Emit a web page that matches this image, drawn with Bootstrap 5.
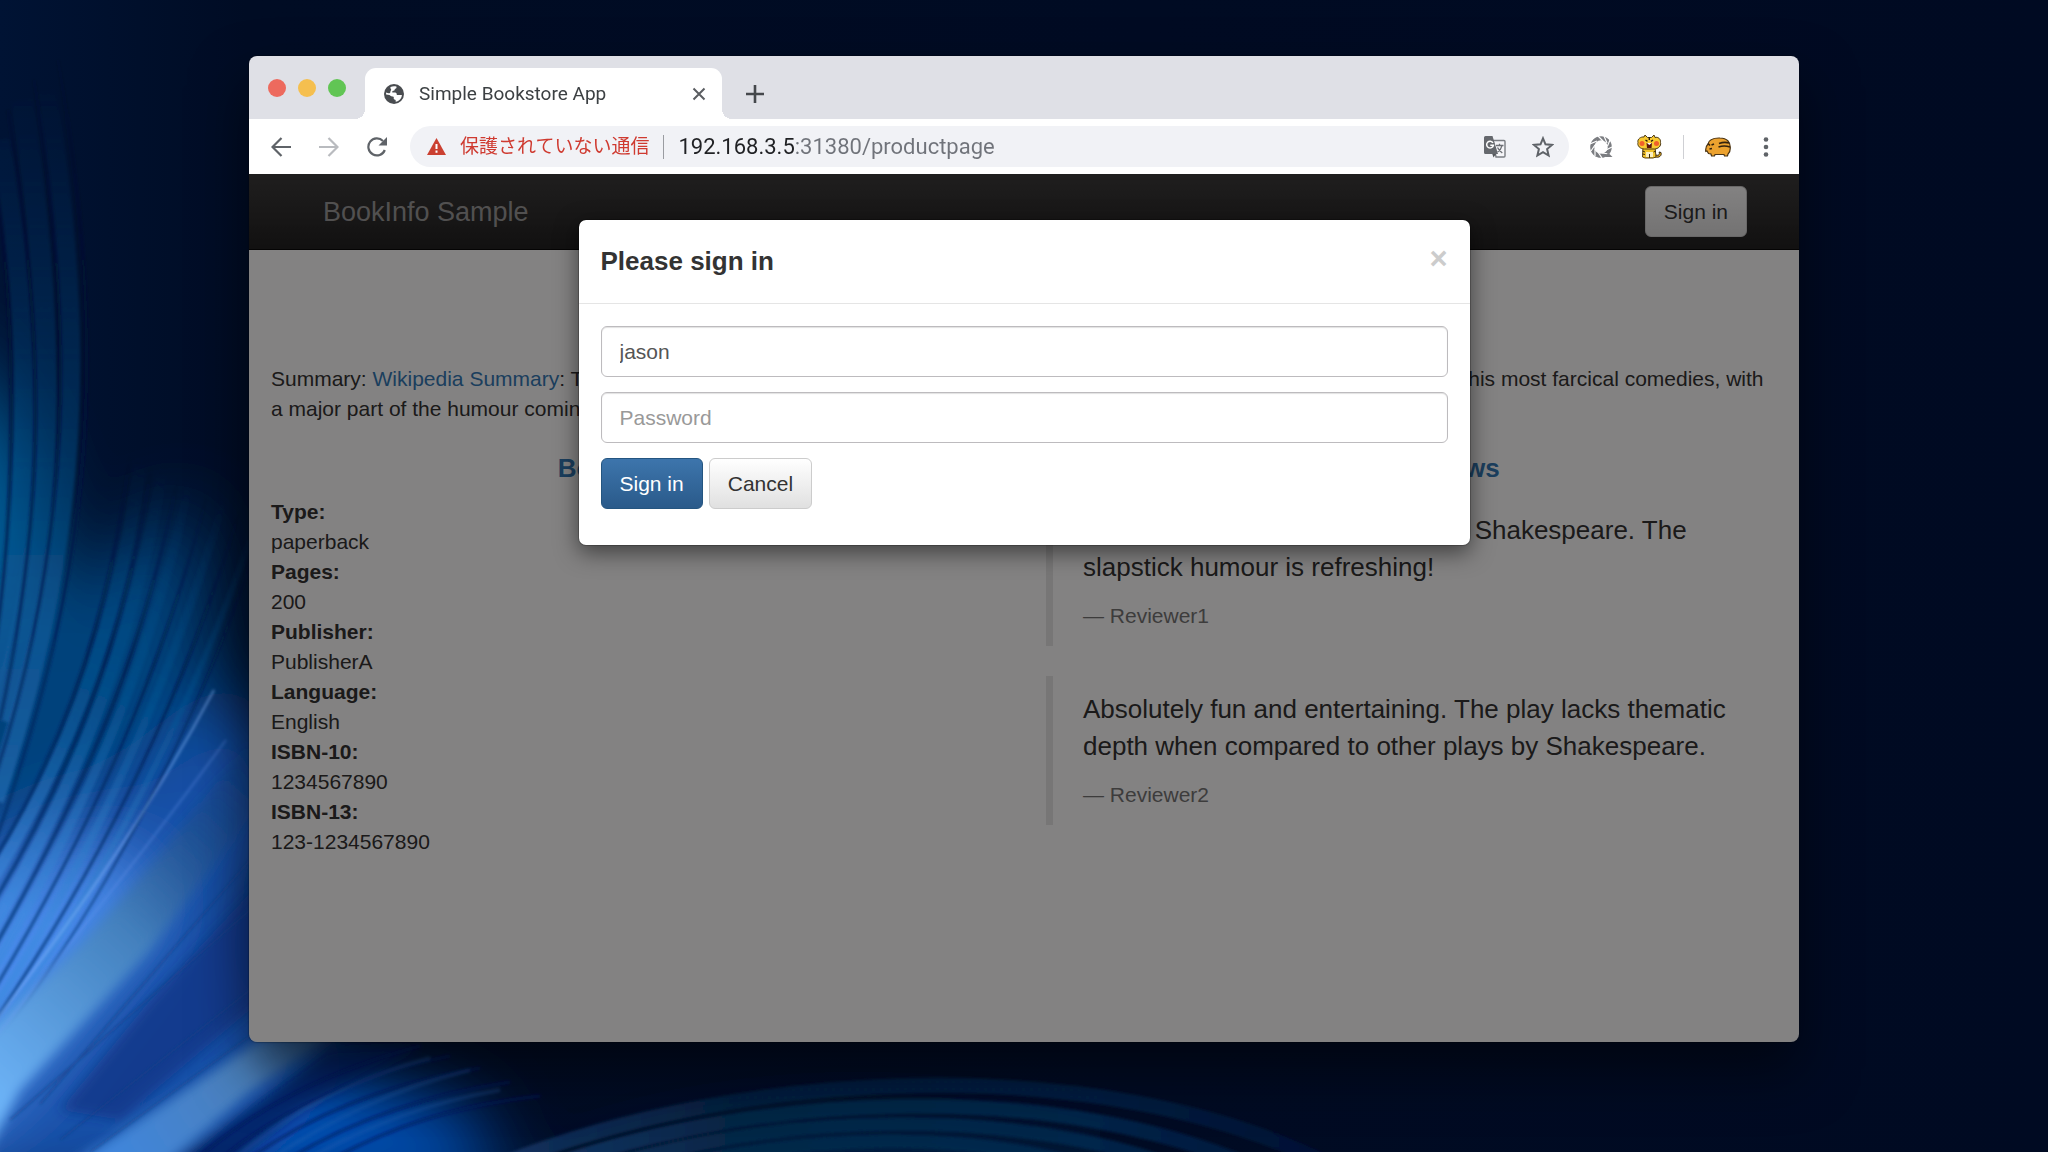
<!DOCTYPE html>
<html lang="en">
<head>
<meta charset="utf-8">
<meta name="viewport" content="width=device-width, initial-scale=1">
<title>Simple Bookstore App</title>
<link href="https://cdn.jsdelivr.net/npm/bootstrap@5.3.0/dist/css/bootstrap.min.css" rel="stylesheet">
<style>
  body { background: #000a20; font-family: "Liberation Sans", Arial, sans-serif; font-size: 21px; line-height: 30px; color: #333; }
  .wallpaper { position: fixed; inset: 0; width: 100%; height: 100%; z-index: -1; }
  .desktop { padding: 56px 249px 110px; }
  .browser { border-radius: 8px; overflow: hidden; box-shadow: 0 28px 56px rgba(0,0,0,.5), 0 0 2px rgba(0,0,0,.7); }
  .desktop a { color: #337ab7; text-decoration: none; }

  /* browser chrome */
  .tab-strip { height: 63px; background: #dfe0e6; padding-left: 19px; }
  .lights { gap: 12px; padding-top: 23px; }
  .light { width: 18px; height: 18px; padding: 0; border: 0; border-radius: 50%; }
  .light-red { background: #ed6a5e; } .light-yellow { background: #f5bf4f; } .light-green { background: #61c554; }
  .page-tab { position: relative; width: 357px; height: 51px; margin-left: 19px; padding: 0 16px 0 19px; gap: 15px; background: #fff; border-radius: 11px 11px 0 0; font: 19px/24px Roboto, sans-serif; color: #3c4043; }
  .page-tab::before, .page-tab::after { content: ""; position: absolute; bottom: 0; width: 10px; height: 10px; }
  .page-tab::before { right: 100%; background: radial-gradient(circle at 0 0, transparent 10px, #fff 10px); }
  .page-tab::after { left: 100%; background: radial-gradient(circle at 100% 0, transparent 10px, #fff 10px); }
  .bare { display: flex; padding: 0; border: 0; background: none; }
  .new-tab { margin: 12px 0 0 24px; height: 51px; align-items: center; }
  .toolbar { height: 55px; background: #fff; padding: 0 30px 0 22px; }
  .history { gap: 28px; }
  .omnibox { height: 41px; margin: 0 21px 0 23px; padding: 0 15px 0 17px; border-radius: 21px; background: #f1f2f6; }
  .insecure { margin-left: 14px; font: 19px/24px Roboto, "Noto Sans CJK JP", sans-serif; color: #cf3a30; white-space: nowrap; }
  .rule { width: 1px; height: 24px; background: #9a9ca1; margin: 0 14px; }
  .address { min-width: 0; border: 0; outline: 0; padding: 0; font: 22px/28px Roboto, sans-serif; color: #202124;
    background: linear-gradient(90deg, #202124 118px, #70737a 118px); -webkit-background-clip: text; background-clip: text; -webkit-text-fill-color: transparent; }
  .omni-icons { gap: 26px; }
  .extensions { gap: 24px; }
  .faint-rule { width: 1px; height: 24px; background: #cfd0d4; margin: 0 -3px; }

  /* web page */
  .site { background: #fff; flex: 1 1 auto; position: relative; }
  .site-bar { min-height: 76px; padding: 12px 52px 12px 74px; background: linear-gradient(#3c3c3c, #222); border-bottom: 1px solid #080808; }
  .site-bar .navbar-brand { font-size: 27px; line-height: 30px; color: #9d9d9d; margin: 0; padding: 0; }
  .btn-site { height: 51px; padding: 0 18px; font-size: 21px; line-height: 30px; border-radius: 6px; }
  .btn-plain { color: #333; border-color: #ccc; background: linear-gradient(#fff, #e0e0e0); }
  .btn-blue { color: #fff; border-color: #245580; background: linear-gradient(#3d75ac, #2a5a8a); }
  .gutter { padding: 0 22px; }
  .summary { padding-top: 30px; }
  .site h3 { font-size: 36px; line-height: 39px; margin: 30px 0 15px; color: #337ab7; font-weight: 500; }
  .site h4 { font-size: 26px; line-height: 29px; margin: 15px 0 14px; color: #337ab7; font-weight: 700; }
  .site p { margin: 0 0 15px; }
  .site dl, .site dd { margin: 0; }
  .review { margin: 0 0 30px; padding: 15px 30px; border-left: 7px solid #e8e8e8; font-size: 26px; line-height: 37px; }
  .review footer { font-size: 21px; line-height: 30px; color: #777; }

  /* sign-in dialog */
  .login { position: absolute; display: block; background: rgba(2,0,1,.49); }
  .login .modal-dialog { max-width: 893px; margin: 45px auto; }
  .login .modal-content { border: 1px solid rgba(0,0,0,.2); border-radius: 8px; box-shadow: 0 7px 22px rgba(0,0,0,.5); color: #333; }
  .login .modal-header { padding: 22px; align-items: flex-start; border-bottom: 1px solid #e5e5e5; }
  .login .modal-title { font-size: 26px; line-height: 39px; font-weight: 700; }
  .login .modal-body { padding: 22px 22px 36px; }
  .shut { font-size: 31px; line-height: 33px; font-weight: 700; color: #ccc; }
  .login .form-control { height: 51px; margin-bottom: 15px; padding: 8px 18px; font-size: 21px; line-height: 30px; border: 1px solid #bdbbbe; border-radius: 6px; color: #555; box-shadow: inset 0 1px 1px rgba(0,0,0,.12); }
  .login .form-control::placeholder { color: #999; }
  .actions { gap: 6px; }
</style>
<script src="https://cdn.jsdelivr.net/npm/bootstrap@5.3.0/dist/js/bootstrap.bundle.min.js"></script>
</head>
<body>

<svg class="wallpaper" viewBox="0 0 2048 1152" preserveAspectRatio="none" aria-hidden="true">
  <defs>
    <linearGradient id="night" x1="0" x2="1"><stop offset="0" stop-color="#001334"/><stop offset=".12" stop-color="#000c24"/><stop offset="1" stop-color="#000a22"/></linearGradient>
    <linearGradient id="fadeDown" gradientUnits="userSpaceOnUse" x1="0" y1="80" x2="0" y2="1000"><stop offset="0" stop-color="#0b4a8c" stop-opacity="0"/><stop offset=".45" stop-color="#05508a" stop-opacity=".5"/><stop offset="1" stop-color="#3f86d8" stop-opacity=".7"/></linearGradient>
    <linearGradient id="fadeOut" gradientUnits="userSpaceOnUse" x1="190" y1="480" x2="0" y2="900"><stop offset="0" stop-color="#0a4a80" stop-opacity="0"/><stop offset=".5" stop-color="#0f5c9c" stop-opacity=".4"/><stop offset="1" stop-color="#3f8ae0" stop-opacity=".75"/></linearGradient>
    <linearGradient id="darkDown" gradientUnits="userSpaceOnUse" x1="0" y1="60" x2="0" y2="1000"><stop offset="0" stop-color="#000c2c" stop-opacity=".1"/><stop offset=".4" stop-color="#00103c" stop-opacity=".8"/><stop offset="1" stop-color="#063478" stop-opacity=".7"/></linearGradient>
    <linearGradient id="darkOut" gradientUnits="userSpaceOnUse" x1="190" y1="480" x2="0" y2="900"><stop offset="0" stop-color="#000c2c" stop-opacity="0"/><stop offset=".4" stop-color="#001444" stop-opacity=".7"/><stop offset="1" stop-color="#063478" stop-opacity=".75"/></linearGradient>
    <linearGradient id="ray" gradientUnits="userSpaceOnUse" x1="0" y1="1100" x2="290" y2="790"><stop offset="0" stop-color="#6cb2f6"/><stop offset=".5" stop-color="#4380bd"/><stop offset="1" stop-color="#0d2b55" stop-opacity=".1"/></linearGradient>
    <linearGradient id="ray2" gradientUnits="userSpaceOnUse" x1="100" y1="1160" x2="340" y2="1010"><stop offset="0" stop-color="#3f86de"/><stop offset=".6" stop-color="#4b80bb"/><stop offset="1" stop-color="#16365c"/></linearGradient>
    <linearGradient id="arc" gradientUnits="userSpaceOnUse" x1="450" y1="0" x2="1380" y2="0"><stop offset="0" stop-color="#234a86"/><stop offset=".3" stop-color="#082a4c"/><stop offset=".7" stop-color="#002a54"/><stop offset="1" stop-color="#00103a"/></linearGradient>
    <filter id="b6" x="-30%" y="-30%" width="160%" height="160%"><feGaussianBlur stdDeviation="6"/></filter>
    <filter id="b2" filterUnits="userSpaceOnUse" x="-60" y="0" width="1700" height="1240"><feGaussianBlur stdDeviation="1.500"/></filter>
    <filter id="b45" filterUnits="userSpaceOnUse" x="-300" y="0" width="1400" height="1500"><feGaussianBlur stdDeviation="38"/></filter>
  </defs>
  <rect width="2048" height="1152" fill="url(#night)"/>
  <g filter="url(#b45)">
    <path d="M-80 330C50 420 60 560 20 700L-80 800Z" fill="#00629e"/>
    <path d="M-80 620C70 600 120 560 190 500L230 760L60 1000L-80 1100Z" fill="#04427c"/>
    <path d="M-80 860L110 790L240 690L290 800L250 960L330 1060L400 1200H-80Z" fill="#1650a8"/>
    <path d="M-80 930L100 840L160 900L0 1100L-80 1160Z" fill="#4a8cec"/>
    <path d="M180 1190L340 1070L470 1110L500 1200Z" fill="#0050b4"/>
    <path d="M480 1230C700 1110 1000 1110 1280 1230Z" fill="#002850"/>
  </g>
  <g fill="none" stroke="url(#fadeDown)" filter="url(#b2)">
    <path stroke-width="20" d="M0 140C34 330 34 520 -12 690"/>
    <path stroke-width="22" d="M22 100C56 330 58 520 0 720"/>
    <path stroke-width="20" d="M46 90C86 330 82 540 -6 800"/>
  </g>
  <g fill="none" stroke="url(#fadeOut)" filter="url(#b2)">
    <path stroke-width="13" d="M152 330C142 560 90 720 -6 876"/>
    <path stroke-width="12" d="M176 380C150 600 90 760 -6 925"/>
    <path stroke-width="9" d="M200 430C160 650 90 800 -6 968"/>
    <path stroke-width="8" d="M230 480C170 690 90 860 -6 1008"/>
    <path stroke-width="6" d="M250 540C180 740 90 900 -6 1036"/>
  </g>
  <g fill="none" stroke="url(#darkDown)" stroke-width="3" filter="url(#b2)">
    <path d="M-2 200C16 330 16 500 -4 640"/>
    <path d="M8 110C44 330 48 500 0 720"/>
    <path d="M34 80C76 330 72 540 -6 780"/>
    <path d="M58 60C108 350 96 560 -6 845"/>
  </g>
  <g fill="none" stroke="url(#darkOut)" stroke-width="4" filter="url(#b2)">
    <path d="M140 330C130 560 80 720 -6 860"/>
    <path d="M164 360C146 580 90 740 -6 902"/>
    <path d="M190 410C156 630 90 780 -6 948"/>
    <path stroke-width="3" d="M216 460C166 670 90 830 -6 990"/>
    <path stroke-width="3" d="M240 510C176 720 90 880 -6 1022"/>
    <path stroke-width="2" d="M252 560C190 740 100 910 -6 1046"/>
  </g>
  <g filter="url(#b6)">
    <path fill="url(#ray)" d="M-20 1040L80 945L160 855L250 740L262 800L150 950L20 1090L-20 1165Z"/>
    <path fill="#0d3280" fill-opacity=".65" d="M60 1110L150 1000L262 880V1000L120 1120Z"/>
    <path fill="url(#ray2)" d="M70 1165L170 1100L260 1040L340 1030L250 1092L165 1165Z"/>
    <path fill="#001a58" fill-opacity=".75" d="M176 1160L330 1050L420 1046L300 1110L230 1165Z"/>
  </g>
  <g fill="none" stroke-width="2" filter="url(#b2)">
    <path stroke="#8cbcff" stroke-opacity=".55" d="M-4 1020C80 910 150 810 214 690"/>
    <path stroke="#6c9cf0" stroke-opacity=".35" d="M-4 1036C90 920 160 830 226 740"/>
    <path stroke="#113d86" stroke-opacity=".6" d="M10 1120L250 910M60 1140L250 990M90 1152L250 1036M40 1104L250 860"/>
    <path stroke="#00185a" stroke-opacity=".6" stroke-width="3" d="M200 1156C260 1106 330 1070 420 1046M222 1158C280 1110 360 1074 450 1056M250 1158C310 1116 380 1086 480 1068M290 1158C350 1122 420 1096 510 1082M330 1160C390 1128 450 1106 540 1096"/>
    <path stroke="#2b66b8" stroke-opacity=".25" stroke-width="4" d="M236 1158C290 1112 350 1080 430 1058M272 1158C330 1120 390 1090 470 1070M310 1158C370 1124 430 1102 500 1090"/>
  </g>
  <g fill="none" stroke="url(#arc)" filter="url(#b2)">
    <path stroke-width="15" stroke-opacity=".6" d="M500 1165C740 1068 1100 1050 1330 1165"/>
    <path stroke-width="15" stroke-opacity=".75" d="M540 1170C760 1090 1060 1080 1260 1170"/>
    <path stroke-width="14" stroke-opacity=".75" d="M590 1172C780 1110 1020 1106 1190 1172"/>
    <path stroke-width="14" stroke-opacity=".75" d="M640 1175C800 1132 980 1128 1110 1175"/>
  </g>
</svg>

<main class="desktop d-flex min-vh-100">
  <div class="browser d-flex flex-column flex-grow-1">

    <div class="tab-strip d-flex align-items-start">
      <div class="lights d-flex">
        <button class="light light-red" type="button" aria-label="Close window"></button>
        <button class="light light-yellow" type="button" aria-label="Minimise window"></button>
        <button class="light light-green" type="button" aria-label="Zoom window"></button>
      </div>
      <div class="page-tab d-flex align-items-center align-self-end">
        <svg width="20" height="20" viewBox="0 0 20 20" aria-hidden="true"><circle cx="10" cy="10" r="10" fill="#494c50"/><path fill="#fff" d="M12.400 2.500C12.900 4 12 4.600 11.100 4.900C10.400 5.200 10.900 6 10.200 6.500C9.500 6.900 8.600 6.600 8.300 7.400C8 8.300 8.600 8.700 9.600 8.600C10.600 8.400 12 8.300 12.500 9.300C12.900 10.100 12.300 10.700 13.300 11C14.300 11.200 15.800 11 17.900 10.900C17.700 14.300 15.200 17.200 11.700 17.800C11.900 16.200 11.500 15.700 10.500 15.500C9.700 15.300 9.600 14.600 9.800 13.900C10 12.900 9.200 12.600 8.200 12.500C6.900 12.400 6.500 11.500 5.500 11L2.100 10.600C2 10 2 9.200 2.200 8.500C3.400 9.200 4.800 9.500 5.800 9.100C6.700 8.700 6 7.600 6.700 6.700C7.400 5.700 7.300 5.500 6.700 4.800C6.400 4.300 6.300 3.800 6.500 3C8.400 2 10.500 1.900 12.400 2.500Z"/></svg>
        <span class="flex-grow-1">Simple Bookstore App</span>
        <button class="bare" type="button" aria-label="Close tab"><svg width="14" height="14" viewBox="0 0 14 14" stroke="#5a5d61" stroke-width="2" fill="none"><path d="M1.500 1.500L12.500 12.500M12.500 1.500L1.500 12.500"/></svg></button>
      </div>
      <button class="bare new-tab" type="button" aria-label="New tab"><svg width="18" height="18" viewBox="0 0 18 18" stroke="#45484c" stroke-width="2.600" fill="none"><path d="M9 0V18M0 9H18"/></svg></button>
    </div>

    <div class="toolbar d-flex align-items-center">
      <div class="history d-flex">
        <button class="bare" type="button" aria-label="Back"><svg width="20" height="20" viewBox="0 0 20 20" stroke="#5f6368" stroke-width="2.200" fill="none"><path d="M20 10H2M10.500 1L1.500 10L10.500 19"/></svg></button>
        <button class="bare" type="button" aria-label="Forward"><svg width="20" height="20" viewBox="0 0 20 20" stroke="#b9bbbf" stroke-width="2.200" fill="none"><path d="M0 10H18M9.500 1L18.500 10L9.500 19"/></svg></button>
        <button class="bare" type="button" aria-label="Reload"><svg width="20" height="20" viewBox="0 0 20 20"><path d="M17.800 13A8.500 8.500 0 1 1 16 4" stroke="#5f6368" stroke-width="2.200" fill="none"/><path d="M20 0V8.500H11.500Z" fill="#5f6368"/></svg></button>
      </div>
      <div class="omnibox d-flex align-items-center flex-grow-1">
        <svg width="19" height="17" viewBox="0 0 19 17" aria-hidden="true"><path d="M9.500 0L19 17H0Z" fill="#cb4031"/><path d="M9.500 6V11M9.500 12.500V14.700" stroke="#fff" stroke-width="2"/></svg>
        <label class="insecure" for="address">保護されていない通信</label>
        <span class="rule"></span>
        <input class="address flex-grow-1" id="address" type="text" value="192.168.3.5:31380/productpage">
        <div class="omni-icons d-flex align-items-center">
          <button class="bare" type="button" aria-label="Translate"><svg width="22" height="22" viewBox="0 0 22 22"><path d="M9 4.500H20A1 1 0 0 1 21 5.500V20A1 1 0 0 1 20 21H12Z" fill="#f5f5f8" stroke="#7a7d82" stroke-width="1.400"/><path d="M1.500 0H8.500L14 18H1.500A1.500 1.500 0 0 1 0 16.500V1.500A1.500 1.500 0 0 1 1.500 0Z" fill="#65686d"/><path d="M12 18L9.500 21.500L8.300 18Z" fill="#54575b"/><path d="M9 6.900A3.400 3.400 0 1 0 9.400 9.300H6.300" fill="none" stroke="#fff" stroke-width="1.500"/><path d="M12 9.500H19.500M15.500 7.700V9.500M18 9.700C17.300 12.800 15.500 14.800 13.600 16M13.500 11.500C14.500 13.500 16.500 15.500 18.300 17" fill="none" stroke="#6c6f74" stroke-width="1.300"/></svg></button>
          <button class="bare" type="button" aria-label="Bookmark this page"><svg width="22" height="22" viewBox="0 0 22 22"><path d="M11 2.300L13.500 8.300L20 8.900L15.100 13.100L16.600 19.500L11 16.100L5.400 19.500L6.900 13.100L2 8.900L8.500 8.300Z" fill="none" stroke="#5f6368" stroke-width="2"/></svg></button>
        </div>
      </div>
      <div class="extensions d-flex align-items-center">
        <button class="bare" type="button" aria-label="Search extension"><svg width="23" height="22" viewBox="0 0 23 22"><circle cx="11" cy="11" r="8.800" fill="none" stroke="#7b7d81" stroke-width="4"/><path stroke="#fff" stroke-width="1.200" d="M8 0L13 5M14 0L17 7M20 4L17.500 10M22 11L16 14M19 18L12 17M12 22L8 16M5 20L5 13M1 15L5 9M0 8L7 5"/><path d="M15 21L22.500 21L18 16.500Z" fill="#7b7d81"/></svg></button>
        <button class="bare" type="button" aria-label="Tiger extension"><svg width="25" height="24" viewBox="0 0 25 24"><path d="M19 20C22 21 23 19 22 17L24 17.500C25 21 22 23 18 22Z" fill="#e8ae24" stroke="#33250f"/><path d="M6 12H18L19 22L16 23H8L5.500 22Z" fill="#f2c32b" stroke="#5b4312"/><path d="M7 2L8 0L10.500 2.500H14.500L17 0L18 2.500C21 1.500 24 4 23.500 7.500C24.500 11 21 14 17.500 14H7.500C3 14 0 10.500 1 7.500C0 4 4 1.500 7 2Z" fill="#f7c931" stroke="#4e3a14"/><circle cx="5" cy="8.500" r="2.500" fill="#f0602a"/><circle cx="19.500" cy="8.500" r="2.500" fill="#f0602a"/><path d="M8.500 5L10.500 6.300M16 5L14 6.300M12.300 2V5" stroke="#2c1f0c" stroke-width="1.400"/><path d="M9.500 8H15L14.500 13H10Z" fill="#5b150e"/><path d="M10 8L12.300 10L14.700 8Z" fill="#fff"/><path d="M9 17H16V22H9Z" fill="#fbf0c0"/><path d="M5.500 16L8 17M5.500 19L8 19.500M19 16L16.500 17M12.500 19V23" stroke="#3b2b0c"/></svg></button>
        <span class="faint-rule"></span>
        <button class="bare" type="button" aria-label="Profile"><svg width="26" height="20" viewBox="0 0 26 20"><path d="M3 7C4 2 9 .8 15 1C22 1 25.500 5 25.300 11C25.300 15 24 16 23 17L22.500 19H19.500L19 17.500H10L9.500 19H6.500L6 17L3.500 16.500L2 14L.8 14.500C.3 11 1.500 8.500 3 7Z" fill="#eca22f" stroke="#4a3415" stroke-width="1.200"/><path d="M3 6.500L5 8.500M6.500 8L9 7M4.500 12L7 11.500M14 6.500C18 5 21 5 24 6M13.500 10C18 8.500 22 9 25 10" stroke="#33220e" stroke-width="1.600" fill="none"/></svg></button>
        <button class="bare ms-2" type="button" aria-label="Menu"><svg width="6" height="20" viewBox="0 0 6 20" fill="#5f6368"><circle cx="3" cy="2.500" r="2.300"/><circle cx="3" cy="10" r="2.300"/><circle cx="3" cy="17.500" r="2.300"/></svg></button>
      </div>
    </div>

    <div class="site">
      <nav class="site-bar navbar d-flex justify-content-between flex-nowrap">
        <a class="navbar-brand" href="#">BookInfo Sample</a>
        <button class="btn btn-site btn-plain" type="button">Sign in</button>
      </nav>
      <div class="container-fluid gutter summary">
        <h3 class="text-center">The Comedy of Errors</h3>
        <p>Summary: <a href="#">Wikipedia Summary</a>: The Comedy of Errors is one of <b>William Shakespeare's</b> early plays. It is his shortest and one of his most farcical comedies, with a major part of the humour coming from slapstick and mistaken identity, in addition to puns and word play.</p>
      </div>
      <div class="row g-0">
        <div class="col-6 gutter">
          <h4 class="text-center">Book Details</h4>
          <dl>
            <dt>Type:</dt><dd>paperback</dd>
            <dt>Pages:</dt><dd>200</dd>
            <dt>Publisher:</dt><dd>PublisherA</dd>
            <dt>Language:</dt><dd>English</dd>
            <dt>ISBN-10:</dt><dd>1234567890</dd>
            <dt>ISBN-13:</dt><dd>123-1234567890</dd>
          </dl>
        </div>
        <div class="col-6 gutter">
          <h4 class="text-center">Book Reviews</h4>
          <blockquote class="review">
            <p>An extremely entertaining play by Shakespeare. The slapstick humour is refreshing!</p>
            <footer>— Reviewer1</footer>
          </blockquote>
          <blockquote class="review">
            <p>Absolutely fun and entertaining. The play lacks thematic depth when compared to other plays by Shakespeare.</p>
            <footer>— Reviewer2</footer>
          </blockquote>
        </div>
      </div>

      <div class="modal login" role="dialog" aria-labelledby="login-title">
        <div class="modal-dialog">
          <div class="modal-content">
            <div class="modal-header">
              <h2 class="modal-title" id="login-title">Please sign in</h2>
              <button class="bare shut" type="button" aria-label="Close">×</button>
            </div>
            <form class="modal-body">
              <label class="visually-hidden" for="username">User Name</label>
              <input class="form-control" id="username" type="text" value="jason">
              <label class="visually-hidden" for="password">Password</label>
              <input class="form-control" id="password" type="password" placeholder="Password">
              <div class="actions d-flex">
                <button class="btn btn-site btn-blue" type="button">Sign in</button>
                <button class="btn btn-site btn-plain" type="button">Cancel</button>
              </div>
            </form>
          </div>
        </div>
      </div>
    </div>

  </div>
</main>
</body>
</html>
